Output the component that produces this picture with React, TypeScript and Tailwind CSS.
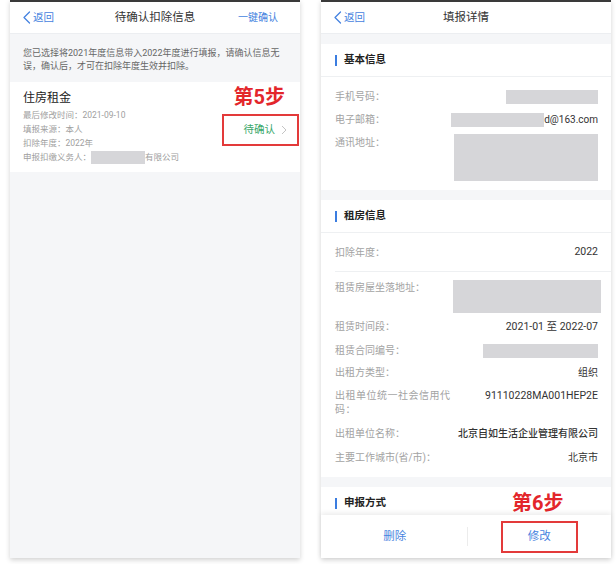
import React from "react";

const FONT = { fontFamily: 'Roboto, "Noto Sans CJK SC", "Noto Sans", sans-serif' };

function Back() {
  return (
    <div className="flex items-center gap-[2px] text-[10.5px] text-[#4683e0]">
      <svg width="9" height="13" viewBox="0 0 9 13" fill="none">
        <path d="M7.5 1 L2 6.5 L7.5 12" stroke="#4683e0" strokeWidth="1.3" strokeLinecap="round" strokeLinejoin="round" />
      </svg>
      <span>返回</span>
    </div>
  );
}

function Header({ title, right }: { title: string; right?: string }) {
  return (
    <div className="relative flex h-[32px] shrink-0 items-center justify-between border-b border-[#eceef1] bg-white pl-[12px] pr-[22px]">
      <Back />
      <div className="absolute left-1/2 -translate-x-1/2 text-[11.5px] text-[#333]">{title}</div>
      <div className="text-[10px] text-[#4683e0]">{right}</div>
    </div>
  );
}

function Mask({ w, h }: { w: number; h: number }) {
  return <div className="bg-[#d6d6d9]" style={{ width: w, height: h }} />;
}

function SectionHead({ title }: { title: string }) {
  return (
    <div className="flex h-[33px] shrink-0 items-center gap-[7px] border-b border-[#eef0f2] bg-white pl-[14px]">
      <div className="h-[11px] w-[2px] bg-[#3b7de0]" />
      <div className="text-[10.5px] font-bold text-[#222]">{title}</div>
    </div>
  );
}

function Row({ label, children, className = "" }: { label: React.ReactNode; children?: React.ReactNode; className?: string }) {
  return (
    <div className={"flex items-start justify-between leading-[14px] " + className}>
      <div className="text-[10px] text-[#a3a3a3]">{label}</div>
      <div className="text-[10px] text-[#333]">{children}</div>
    </div>
  );
}

function LeftPanel() {
  return (
    <div className="flex h-[558px] w-[290px] shrink-0 flex-col border-t-2 border-[#3a3a3a] bg-[#f5f6f8] shadow-[0_2px_5px_rgba(0,0,0,0.18)]">
      <Header title="待确认扣除信息" right="一键确认" />
      <div className="pl-[13px] pr-[14px] pt-[13px] pb-[10px] text-[9px] leading-[12.5px] text-[#666]">
        您已选择将2021年度信息带入2022年度进行填报，请确认信息无误，确认后，才可在扣除年度生效并扣除。
      </div>
      <div className="relative flex h-[90px] bg-white pl-[13px] pr-[1px]">
        <div className="flex flex-1 flex-col pt-[8px]">
          <div className="text-[12px] leading-[17px] text-[#222]">住房租金</div>
          <div className="mt-[1px] text-[8.5px] leading-[14px] text-[#a0a0a0]">
            <div>最后修改时间：2021-09-10</div>
            <div>填报来源：本人</div>
            <div>扣除年度：2022年</div>
            <div className="flex items-center">
              <span>申报扣缴义务人：</span>
              <span className="inline-block h-[13px] w-[54px] bg-[#d6d6d9]" />
              <span>有限公司</span>
            </div>
          </div>
        </div>
        <div className="flex flex-col items-end pt-[3px]">
          <div className="pr-[14px] text-[20px] font-bold leading-[24px] text-[#e3262b]">第5步</div>
          <div className="mt-[5px] flex h-[32px] w-[77px] items-center justify-end gap-[6px] border-2 border-[#e33a3a] pr-[10px]">
            <span className="text-[10.5px] text-[#39a86a]">待确认</span>
            <svg width="6" height="10" viewBox="0 0 6 10" fill="none">
              <path d="M1 1 L5 5 L1 9" stroke="#c4c4c4" strokeWidth="1" />
            </svg>
          </div>
        </div>
      </div>
    </div>
  );
}

function RightPanel() {
  return (
    <div className="relative flex h-[558px] w-[290px] shrink-0 flex-col border-t-2 border-[#3a3a3a] bg-[#f5f6f8] shadow-[0_2px_5px_rgba(0,0,0,0.18)]">
      <Header title="填报详情" />
      <div className="flex-1 overflow-hidden pt-[10px]">
        <SectionHead title="基本信息" />
        <div className="bg-white pl-[14px] pr-[13px] pt-[13px] pb-[9px]">
          <Row label="手机号码：">
            <Mask w={92} h={14} />
          </Row>
          <Row label="电子邮箱：" className="mt-[9px]">
            <div className="flex items-center">
              <Mask w={93} h={14} />
              <span className="text-[10px]">d@163.com</span>
            </div>
          </Row>
          <div className="mt-[7px] flex items-start justify-between leading-[14px]">
            <div className="mt-[2px] text-[10px] text-[#a3a3a3]">通讯地址：</div>
            <Mask w={144} h={47} />
          </div>
        </div>
        <div className="mt-[10px]">
          <SectionHead title="租房信息" />
        </div>
        <div className="bg-white pl-[14px] pr-[13px] pb-[12px]">
          <div className="flex h-[39px] items-center justify-between border-b border-[#eef0f2] -mr-[13px] pr-[13px]">
            <div className="text-[10px] text-[#a3a3a3]">扣除年度：</div>
            <div className="text-[10.5px] text-[#333]">2022</div>
          </div>
          <div className="mt-[8px] flex items-start justify-between leading-[14px]">
            <div className="mt-[1px] text-[10px] text-[#a3a3a3]">租赁房屋坐落地址：</div>
            <div className="-mr-[3px]">
              <Mask w={148} h={33} />
            </div>
          </div>
          <Row label="租赁时间段：" className="mt-[7px]">
            <span className="text-[10.5px]">2021-01 至 2022-07</span>
          </Row>
          <Row label="租赁合同编号：" className="mt-[10px]">
            <Mask w={115} h={14} />
          </Row>
          <Row label="出租方类型：" className="mt-[8px]">
            组织
          </Row>
          <Row
            label={
              <span className="tracking-[0.5px]">
                出租单位统一社会信用代
                <br />
                码：
              </span>
            }
            className="mt-[9px]"
          >
            <span className="text-[10.5px]">91110228MA001HEP2E</span>
          </Row>
          <Row label="出租单位名称：" className="mt-[10px]">
            <span className="font-medium">北京自如生活企业管理有限公司</span>
          </Row>
          <Row label="主要工作城市(省/市)：" className="mt-[10px]">
            北京市
          </Row>
        </div>
        <div className="mt-[10px]">
          <SectionHead title="申报方式" />
        </div>
      </div>
      <div className="absolute left-[191px] top-[491px] text-[20px] font-bold leading-[20px] text-[#e3262b]">第6步</div>
      <div className="relative flex h-[43px] shrink-0 items-center bg-white shadow-[0_-2px_5px_rgba(0,0,0,0.08)]">
        <div className="flex flex-1 justify-center pl-[2px] text-[11.5px] text-[#4683e0]">删除</div>
        <div className="h-[19px] w-px bg-[#ececec]" />
        <div className="flex flex-1 justify-center">
          <div className="flex h-[32px] w-[77px] items-center justify-center border-2 border-[#e33a3a] text-[11.5px] text-[#4683e0]">
            修改
          </div>
        </div>
      </div>
    </div>
  );
}

export default function App() {
  return (
    <div className="flex h-[564px] w-[616px] gap-[21px] bg-white pl-[10px]" style={FONT}>
      <LeftPanel />
      <RightPanel />
    </div>
  );
}
